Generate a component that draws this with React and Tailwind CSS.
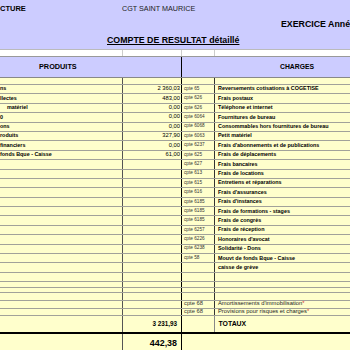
import React from 'react';

// compte de résultat, lignes du tableau (produits à gauche, charges à droite)
const rows = [
  { left: 'ns', amount: '2 360,03', cpte: 'cpte 65', label: 'Reversements cotisations à COGETISE' },
  { left: 'llectes', amount: '483,00', cpte: 'cpte 626', label: 'Frais postaux' },
  { left: 'matériel', indent: true, amount: '0,00', cpte: 'cpte 626', label: 'Téléphone et internet' },
  { left: '0', amount: '0,00', cpte: 'cpte 6064', label: 'Fournitures de bureau' },
  { left: 'ons', amount: '0,00', cpte: 'cpte 6068', label: 'Consommables hors fournitures de bureau' },
  { left: 'roduits', amount: '327,90', cpte: 'cpte 6063', label: 'Petit matériel' },
  { left: 'financiers', amount: '0,00', cpte: 'cpte 6237', label: "Frais d'abonnements et de publications" },
  { left: 'fonds Bque - Caisse', amount: '61,00', cpte: 'cpte 625', label: 'Frais de déplacements' },
  { cpte: 'cpte 627', label: 'Frais bancaires' },
  { cpte: 'cpte 613', label: 'Frais de locations' },
  { cpte: 'cpte 615', label: 'Entretiens et réparations' },
  { cpte: 'cpte 616', label: "Frais d'assurances" },
  { cpte: 'cpte 6185', label: "Frais d'instances" },
  { cpte: 'cpte 6185', label: 'Frais de formations - stages' },
  { cpte: 'cpte 6185', label: 'Frais de congrès' },
  { cpte: 'cpte 6257', label: 'Frais de réception' },
  { cpte: 'cpte 6226', label: "Honoraires d'avocat" },
  { cpte: 'cpte 6238', label: 'Solidarité - Dons' },
  { cpte: 'cpte 58', label: 'Mouvt de fonds Bque - Caisse' },
  { label: 'caisse de grève' },
];

const grid = 'grid grid-cols-[122px_59px_33px_1fr]';

function Row({ left, indent, amount, cpte, label }) {
  return (
    <div className={`${grid} h-[9.4px] border-b border-[#a2a29a]`}>
      <div className={`flex items-center whitespace-nowrap overflow-hidden text-[5.4px] font-bold ${indent ? 'pl-[7px]' : 'pl-0'}`}>
        {left}
      </div>
      <div className="flex items-center justify-end border-l border-[#555] pr-[1px] text-[5.8px]">{amount}</div>
      <div className="flex items-center border-l border-black pl-[2px] text-[4.7px] text-[#333]">{cpte}</div>
      <div className="flex items-center whitespace-nowrap border-l border-[#333] pl-[3px] text-[5.4px] font-bold">{label}</div>
    </div>
  );
}

function Blank({ h }) {
  return (
    <div className={`${grid} ${h} border-b border-[#a2a29a]`}>
      <div />
      <div className="border-l border-[#555]" />
      <div className="border-l border-black" />
      <div className="border-l border-[#333]" />
    </div>
  );
}

function SmallRow({ cpte, label }) {
  return (
    <div className={`${grid} h-[7.7px] border-b border-[#a2a29a]`}>
      <div />
      <div className="border-l border-[#555]" />
      <div className="flex items-center border-l border-black pl-[2px] text-[5.8px] text-[#333]">{cpte}</div>
      <div className="flex items-center whitespace-nowrap border-l border-[#333] pl-[3px] text-[5.8px] text-[#222]">
        {label}
        <span className="text-[#e03030]">*</span>
      </div>
    </div>
  );
}

const App = () => {
  return (
    <div className="w-[350px] h-[350px] overflow-hidden bg-[#ffffcc] font-['Liberation_Sans',Arial,sans-serif] text-black leading-none">
      {/* en-tête */}
      <div className="h-[49px] bg-[#ccccff] flex flex-col whitespace-nowrap">
        <div className="h-[17px] flex items-center">
          <span className="w-[122px] text-[7.5px] font-bold">CTURE</span>
          <span className="text-[7.2px] text-[#222]">CGT SAINT MAURICE</span>
        </div>
        <div className="h-[14px] flex items-center pl-[281px] text-[8.8px] font-bold">EXERCICE Année</div>
        <div className="h-[18px] flex items-center pl-[107px] text-[8.8px] font-bold underline underline-offset-1">
          COMPTE DE RESULTAT détaillé
        </div>
      </div>
      <div className={`${grid} h-[8px] bg-white border-t border-b border-t-[#bbb] border-b-[#999]`}>
        <div />
        <div className="border-l border-[#ccc]" />
        <div className="border-l border-[#ccc]" />
        <div className="border-l border-[#ccc]" />
      </div>
      <div className="grid grid-cols-[181px_1fr] h-[21px] bg-[#ccccff] border-b border-[#888]">
        <div className="flex items-center pl-[39px] text-[7.3px] font-bold">PRODUITS</div>
        <div className="flex items-center border-l border-black pl-[98px] text-[6.8px] font-bold">CHARGES</div>
      </div>
      <Blank h="h-[7px]" />

      {rows.map((r, i) => (
        <Row key={i} {...r} />
      ))}

      <Blank h="h-[9.2px]" />
      <Blank h="h-[5.6px]" />
      <Blank h="h-[5px]" />
      <Blank h="h-[8.4px]" />
      <SmallRow cpte="cpte 68" label="Amortissements d'immobilisation" />
      <SmallRow cpte="cpte 68" label="Provisions pour risques et charges" />

      {/* totaux */}
      <div className={`${grid} h-[16px]`}>
        <div />
        <div className="flex items-center justify-end border-l border-[#555] pr-[4px] text-[6.3px] font-bold">3 231,93</div>
        <div className="border-l border-black" />
        <div className="flex items-center border-l border-[#888] pl-[3.5px] text-[6.9px] font-bold">TOTAUX</div>
      </div>
      <div className="grid grid-cols-[122px_59px_1fr] h-[20px] border-t-2 border-black">
        <div />
        <div className="flex items-center justify-end border-l border-[#555] pr-[4px] text-[8.9px] font-bold">442,38</div>
        <div className="border-l border-black" />
      </div>
    </div>
  );
};

export default App;
